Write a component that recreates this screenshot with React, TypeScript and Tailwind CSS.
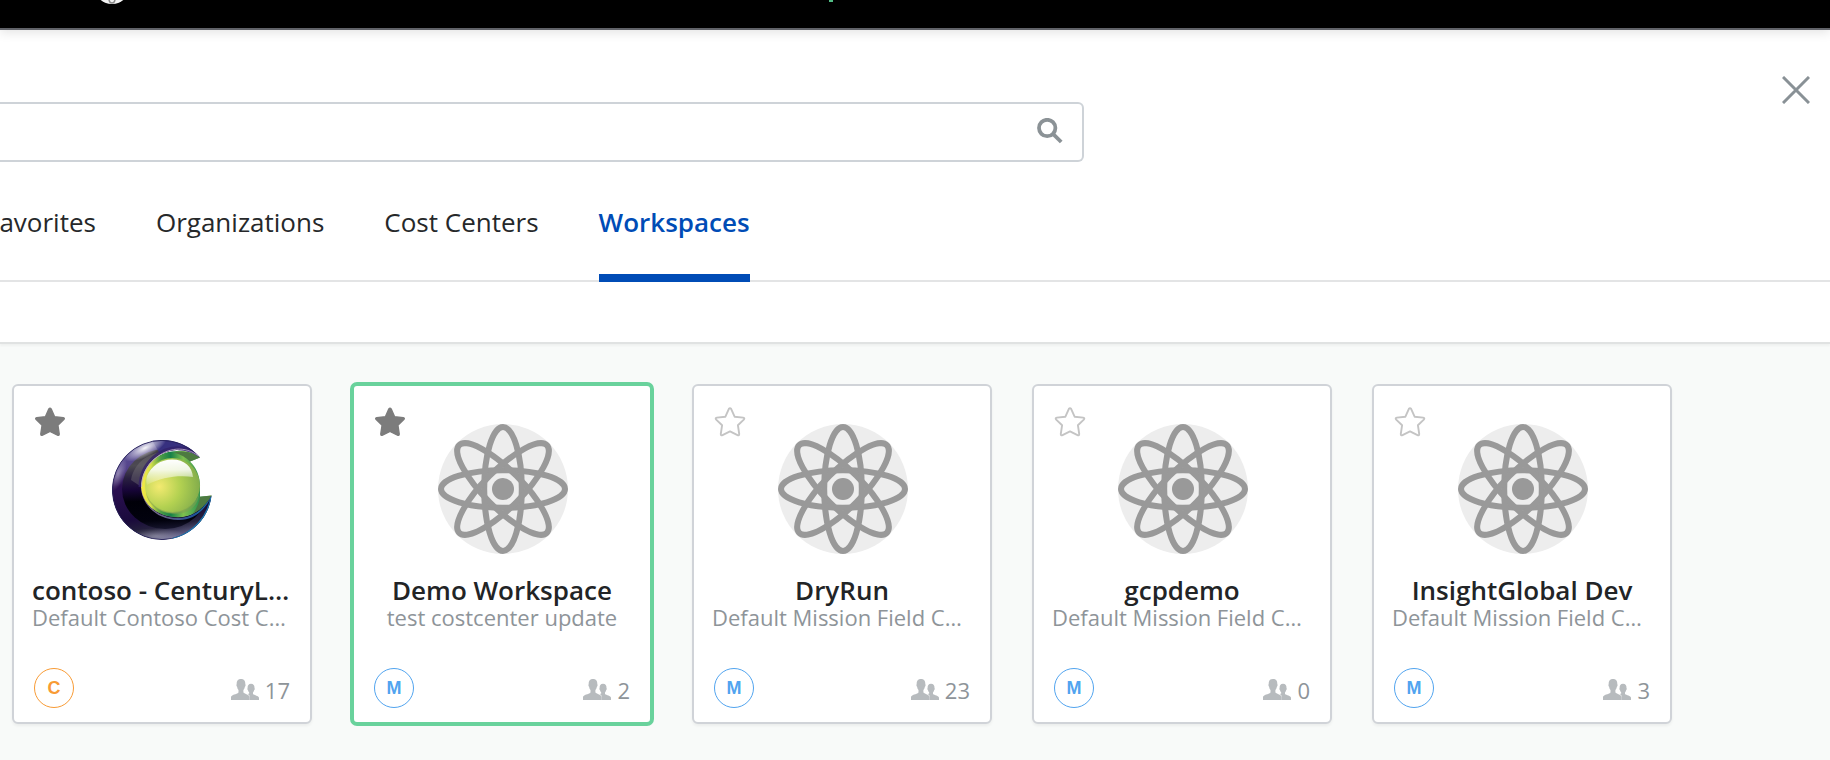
import React from "react";

type Workspace = {
  name: string;
  costCenter: string;
  members: number;
  org: "C" | "M";
  favorite: boolean;
  selected?: boolean;
  logo?: boolean;
};

const workspaces: Workspace[] = [
  { name: "contoso - CenturyLink", costCenter: "Default Contoso Cost Center", members: 17, org: "C", favorite: true, logo: true },
  { name: "Demo Workspace", costCenter: "test costcenter update", members: 2, org: "M", favorite: true, selected: true },
  { name: "DryRun", costCenter: "Default Mission Field Cost Center", members: 23, org: "M", favorite: false },
  { name: "gcpdemo", costCenter: "Default Mission Field Cost Center", members: 0, org: "M", favorite: false },
  { name: "InsightGlobal Dev", costCenter: "Default Mission Field Cost Center", members: 3, org: "M", favorite: false },
];

const tabs = ["Favorites", "Organizations", "Cost Centers", "Workspaces"];

function Star({ filled }: { filled: boolean }) {
  return (
    <svg viewBox="0 0 32 30" className="block h-[30px] w-8">
      <path
        d="M14.9 1.9 Q16 0.3 17.1 1.9 L20.6 9.7 L29.2 10.6 Q31.1 11 29.8 12.6 L23.9 18.2 L25.2 26.9 Q25.2 28.9 23.5 28.2 L16 24.4 L8.5 28.2 Q6.8 28.9 6.8 26.9 L8.1 18.2 L2.2 12.6 Q0.9 11 2.8 10.6 L11.4 9.7 Z"
        fill={filled ? "#7c7c7c" : "none"}
        stroke={filled ? "#7c7c7c" : "#c4c4c4"}
        strokeWidth={filled ? 1.4 : 1.9}
        strokeLinejoin="round"
      />
    </svg>
  );
}

function Atom() {
  return (
    <svg viewBox="0 0 130 130" className="block size-[130px]">
      <circle cx="65" cy="65" r="65" fill="#ededed" />
      <g fill="none" stroke="#999" strokeWidth="6">
        {[0, 45, 90, 135].map((angle) => (
          <ellipse key={angle} cx="65" cy="65" rx="62" ry="18.8" transform={`rotate(${angle} 65 65)`} />
        ))}
      </g>
      <circle cx="65" cy="65" r="11" fill="#999" />
    </svg>
  );
}

function ContosoLogo() {
  return (
    <svg viewBox="0 0 100 100" className="mt-0.5 -ml-0.5 block size-[100px]">
      <defs>
        <linearGradient id="rim" x1="0.3" y1="0" x2="0.5" y2="1">
          <stop offset="0" stopColor="#5c5698" />
          <stop offset="0.25" stopColor="#54428a" />
          <stop offset="0.4" stopColor="#2c1052" />
          <stop offset="0.75" stopColor="#1a0a3c" />
          <stop offset="0.88" stopColor="#25223c" />
          <stop offset="1" stopColor="#6a6790" />
        </linearGradient>
        <linearGradient id="body" x1="0.3" y1="0" x2="0.35" y2="1">
          <stop offset="0" stopColor="#403d45" />
          <stop offset="0.2" stopColor="#4d4a52" />
          <stop offset="0.35" stopColor="#2a2140" />
          <stop offset="0.5" stopColor="#170538" />
          <stop offset="0.65" stopColor="#000008" />
          <stop offset="0.9" stopColor="#02020e" />
          <stop offset="1" stopColor="#15142c" />
        </linearGradient>
        <radialGradient id="shine" cx="0.5" cy="0.5" r="0.5">
          <stop offset="0" stopColor="#fff" stopOpacity="0.95" />
          <stop offset="0.5" stopColor="#fff" stopOpacity="0.45" />
          <stop offset="1" stopColor="#fff" stopOpacity="0" />
        </radialGradient>
        <radialGradient id="ball" cx="0.26" cy="0.52" r="0.76">
          <stop offset="0" stopColor="#f3ea70" />
          <stop offset="0.5" stopColor="#b3d151" />
          <stop offset="1" stopColor="#80ab4b" />
        </radialGradient>
        <linearGradient id="ring" x1="0" y1="0" x2="1" y2="0">
          <stop offset="0" stopColor="#f6ea45" />
          <stop offset="0.14" stopColor="#d6e04a" />
          <stop offset="0.28" stopColor="#4d9c45" />
          <stop offset="0.42" stopColor="#168048" />
          <stop offset="0.6" stopColor="#7fc04e" />
          <stop offset="0.85" stopColor="#2a9150" />
          <stop offset="1" stopColor="#8cbc52" />
        </linearGradient>
        <linearGradient id="gloss" x1="0" y1="0" x2="0" y2="1">
          <stop offset="0" stopColor="#fff" />
          <stop offset="0.4" stopColor="#fff" stopOpacity="0.85" />
          <stop offset="1" stopColor="#fff" stopOpacity="0.1" />
        </linearGradient>
        <linearGradient id="edge" x1="0" y1="0" x2="1" y2="0">
          <stop offset="0" stopColor="#8e7c98" />
          <stop offset="0.4" stopColor="#5a5a86" />
          <stop offset="0.75" stopColor="#1f4f98" />
          <stop offset="1" stopColor="#1685b6" />
        </linearGradient>
        <clipPath id="crescent">
          <path d="M88 17.5 A50 50 0 1 0 99.6 55.5 C92 69 80 77.5 66 77.5 C46 77.5 29 64 29 47 C29 27 45 10.5 65 10 C74 10 82 13 88 17.5 Z" />
        </clipPath>
      </defs>

      <path d="M65 11 C74 10 82 13 88 17.5 L78 21.5 C84 27 88 36 88 46 L88 56.8 L99.6 55.5 C92 69 80 77.5 66 77.5 C46 77.5 29 64 29 47 C29 27 45 11 65 11 Z" fill="url(#ring)" />
      <path d="M62 12.5 C73 9.5 82 13 88 17.5 L78 21.5 C74 17.5 69 14.5 62 12.5 Z" fill="#4d7a41" />
      <path d="M88 56.8 L99.6 55.5 C95 65 88 72 79 76 C84 70 87 64 88 56.8 Z" fill="#4d7a41" />
      <circle cx="60.5" cy="45.5" r="27.5" fill="url(#ball)" />
      <path d="M34 52 C38 68 56 76 71 70 C79 67 85 60 87.5 53 C86 68 74 75 61 74 C46 73 35 64 34 52 Z" fill="#7f9e50" opacity="0.55" />
      <path d="M35 36 C39 26 49 19.5 60 19.5 C73 19.5 80 27 81 37 C66 35 50 37 35 45 C34 42 34 39 35 36 Z" fill="url(#gloss)" />

      <g clipPath="url(#crescent)">
        <circle cx="50" cy="50" r="50" fill="url(#rim)" />
        <ellipse cx="53" cy="49" rx="43" ry="40" fill="url(#body)" />
        <path d="M19 40 C22 24 34 14 50 12 C36 20 29 32 28 46 Z" fill="#77747b" opacity="0.4" />
        <path d="M40 0 C62 -4 80 6 90 19 C80 9 62 7 48 14 Z" fill="#37307f" />
        <ellipse cx="33" cy="8" rx="24" ry="9" fill="url(#shine)" transform="rotate(-27 33 8)" />
        <ellipse cx="6" cy="34" rx="7" ry="18" fill="url(#shine)" opacity="0.4" transform="rotate(20 6 34)" />
        <ellipse cx="44" cy="96" rx="30" ry="8" fill="url(#shine)" opacity="0.3" />
        <path d="M88 17.5 C74 6 56 7 43 18 C34 26 29.5 36 29.5 47" fill="none" stroke="#33206a" strokeWidth="6" opacity="0.75" />
        <circle cx="50" cy="50" r="49.6" fill="none" stroke="#28245a" strokeWidth="0.9" />
        <path d="M60 99 C80 94 96 78 99.5 56" fill="none" stroke="#1d74ac" strokeWidth="1.8" />
      </g>
      <path d="M86.5 16 C73 5.5 56 7.5 43 18.5 C34 26 29.5 36 29.5 47" fill="none" stroke="#b9a6c4" strokeWidth="0.9" />
      <path d="M29.2 46 C29.5 64 46 78 66 78 C80 78 92 69 99.3 56.5 C92 72 80 80.5 66 80 C45 79.5 29 65 29.2 46 Z" fill="url(#edge)" />
    </svg>
  );
}

function Members() {
  return (
    <svg viewBox="0 0 28 21" className="block h-[21px] w-7" fill="#b7bbbe">
      <path d="M10 0 C13.3 0 14.4 2.2 14.3 5 C14.8 5.8 14.6 7.2 13.9 7.8 C13.6 9.2 13.1 10.3 12.4 11.1 V13.4 C14 14.9 18.4 15.4 18.6 18 V21 H0 V18 C.3 15.6 5.6 15.3 7.5 13.4 V11.1 C6.7 10.3 6.3 9.2 6.1 7.8 C5.4 7.2 5.2 5.8 5.7 5 C5.6 2.2 6.7 0 10 0 Z" />
      <path d="M20 4.8 C22.6 4.8 23.6 6.7 23.5 9 C24 9.8 23.7 10.8 23.1 11.3 C22.9 12.3 22.5 13 22 13.6 V15 C23.4 16.3 27.8 16.7 28 18.7 V21 H18.6 V18 C18.6 16.4 18 15.7 16.5 15.1 C17.4 14.9 18 14.7 18.2 14.5 V13.6 C17.6 13 17.2 12.3 17 11.3 C16.4 10.8 16.2 9.8 16.6 9 C16.5 6.7 17.5 4.8 20 4.8 Z" />
    </svg>
  );
}

function WorkspaceCard({ workspace: w }: { workspace: Workspace }) {
  return (
    <article
      className={
        w.selected
          ? "relative -m-0.5 h-[344px] w-[304px] shrink-0 rounded-[7px] border-4 border-[#69d29c] bg-white"
          : "relative h-[340px] w-[300px] shrink-0 rounded-md border-2 border-[#d0d3d8] bg-white shadow-[0_2px_3px_rgba(0,0,0,0.05)]"
      }
    >
      <div className="absolute top-[21px] left-5">
        <Star filled={w.favorite} />
      </div>
      <div className="flex h-full flex-col px-[18px] pt-[38px]">
        <div className="flex h-[130px] items-center justify-center pl-0.5">
          {w.logo ? <ContosoLogo /> : <Atom />}
        </div>
        <h2 className="mt-[18px] h-9 truncate text-center text-[26px] leading-9 font-semibold text-[#222426]">
          {w.name}
        </h2>
        <p className="-mt-1.5 h-[30px] truncate text-center text-[22px] leading-[30px] text-[#8e9499]">{w.costCenter}</p>
        <div className="mt-9 flex h-10 items-center justify-between pr-0.5 pl-0.5">
          <span
            className={
              w.org === "C"
                ? "flex size-10 items-center justify-center rounded-full border border-[#f89b35] pt-px font-['Liberation_Sans',sans-serif] text-[18px] font-bold text-[#f89b35]"
                : "flex size-10 items-center justify-center rounded-full border border-[#51a4ef] pt-px font-['Liberation_Sans',sans-serif] text-[18px] font-bold text-[#51a4ef]"
            }
          >
            {w.org}
          </span>
          <span className="flex items-center gap-1.5 pt-[3px] text-[22px] leading-7 text-[#8e9499]">
            <Members />
            {w.members}
          </span>
        </div>
      </div>
    </article>
  );
}

export default function App() {
  return (
    <div className="flex h-[760px] w-[1830px] flex-col overflow-hidden bg-white font-['Open_Sans',sans-serif]">
      <header className="relative z-10 h-[30px] shrink-0 border-b-2 border-[#606268] bg-black shadow-[0_2px_12px_rgba(0,0,0,0.12)]">
        <svg viewBox="0 0 740 4" className="block h-1 w-[740px]">
          <circle cx="112" cy="-14" r="18" fill="#f2f2f2" />
          <path d="M109 0 C110 4 114 4 115 0" fill="none" stroke="#888" strokeWidth="1.5" />
        </svg>
        <span className="absolute top-0 left-[829px] h-0.5 w-1 bg-[#52bd85]" />
      </header>

      <div className="flex h-[132px] shrink-0 items-start justify-between pt-[72px] pr-5">
        <div className="flex h-[60px] w-[1084px] items-center justify-end rounded-r-md border-2 border-l-0 border-[#ced3d8] pr-[19px]">
          <svg viewBox="0 0 26 26" className="mb-0.5 block size-[26px]" fill="none" stroke="#8b9296">
            <circle cx="10.2" cy="10" r="8.2" strokeWidth="3.8" />
            <path d="M16 15.8 L24.2 24" strokeWidth="3.8" />
          </svg>
        </div>
        <svg viewBox="0 0 28 28" className="-mt-[26px] block size-7" fill="none" stroke="#899196" strokeWidth="3">
          <path d="M1 1 L27 27 M27 1 L1 27" />
        </svg>
      </div>

      <nav className="-ml-3.5 flex h-[120px] shrink-0 gap-[60px] border-b-2 border-[#e3e4e5]">
        {tabs.map((tab) => (
          <button
            key={tab}
            className={
              tab === "Workspaces"
                ? "-mb-0.5 h-[120px] border-b-8 border-[#004cb6] pt-2 text-[26px] leading-[36px] font-semibold text-[#004cb6]"
                : "h-[118px] pt-0.5 text-[26px] leading-[36px] text-[#26282a]"
            }
          >
            {tab}
          </button>
        ))}
      </nav>

      <div className="relative h-[62px] shrink-0 border-b-2 border-[#e0e2e2] shadow-[0_2px_2px_rgba(0,0,0,0.04)]" />

      <main className="flex flex-1 items-start gap-10 bg-[#f8faf9] pt-10 pl-3">
        {workspaces.map((w) => (
          <WorkspaceCard key={w.name} workspace={w} />
        ))}
      </main>
    </div>
  );
}
